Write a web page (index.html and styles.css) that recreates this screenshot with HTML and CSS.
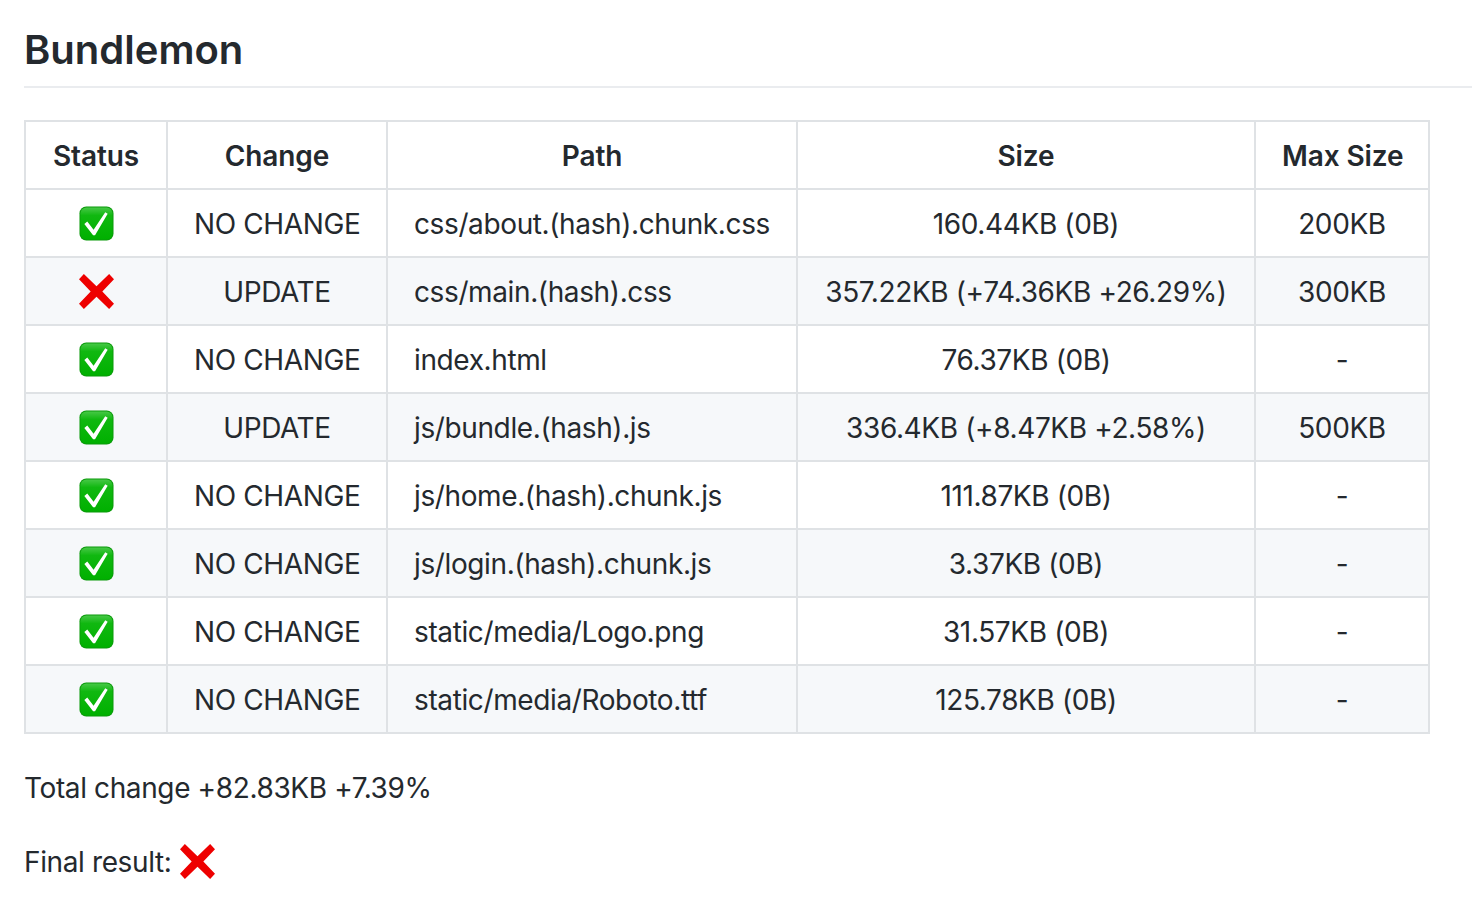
FILE: index.html
```html
<!DOCTYPE html>
<html lang="en">
<head>
<meta charset="utf-8">
<title>Bundlemon</title>
<link rel="stylesheet" href="styles.css">
</head>
<body>
<svg class="defs" width="0" height="0" aria-hidden="true">
  <defs>
    <linearGradient id="g" x1="0" y1="0" x2="0" y2="1">
      <stop offset="0" stop-color="#46c846"/><stop offset="0.25" stop-color="#10b810"/><stop offset="1" stop-color="#00b000"/>
    </linearGradient>
    <symbol id="ok" viewBox="0 0 36 36">
      <rect x="0.5" y="0.5" width="35" height="35" rx="7" fill="#0a9a0a"/>
      <rect x="1.5" y="1.5" width="33" height="33" rx="6" fill="url(#g)"/>
      <path d="M5.5 18.5 L8.5 16 L15 24.5 L27 6.5 L29.5 8 L16.5 30 L14.5 30 Z" fill="#fff"/>
    </symbol>
    <symbol id="no" viewBox="0 0 36 36">
      <path d="M5 0 L18 12.5 L31 0 L36 5.5 L24 18 L36 30.5 L31 36 L18 23.5 L5 36 L0 30.5 L12 18 L0 5.5 Z" fill="#ee0000"/>
    </symbol>
  </defs>
</svg>
<h2 class="title">Bundlemon</h2>
<table class="report">
  <colgroup>
    <col class="c1"><col class="c2"><col class="c3"><col class="c4"><col class="c5">
  </colgroup>
  <thead>
    <tr><th>Status</th><th>Change</th><th>Path</th><th>Size</th><th>Max Size</th></tr>
  </thead>
  <tbody>
    <tr><td class="mid"><svg class="emoji"><use href="#ok"/></svg></td><td class="mid">NO CHANGE</td><td>css/about.(hash).chunk.css</td><td class="mid">160.44KB (0B)</td><td class="mid">200KB</td></tr>
    <tr><td class="mid"><svg class="emoji"><use href="#no"/></svg></td><td class="mid">UPDATE</td><td>css/main.(hash).css</td><td class="mid">357.22KB (+74.36KB +26.29%)</td><td class="mid">300KB</td></tr>
    <tr><td class="mid"><svg class="emoji"><use href="#ok"/></svg></td><td class="mid">NO CHANGE</td><td>index.html</td><td class="mid">76.37KB (0B)</td><td class="mid">-</td></tr>
    <tr><td class="mid"><svg class="emoji"><use href="#ok"/></svg></td><td class="mid">UPDATE</td><td>js/bundle.(hash).js</td><td class="mid">336.4KB (+8.47KB +2.58%)</td><td class="mid">500KB</td></tr>
    <tr><td class="mid"><svg class="emoji"><use href="#ok"/></svg></td><td class="mid">NO CHANGE</td><td>js/home.(hash).chunk.js</td><td class="mid">111.87KB (0B)</td><td class="mid">-</td></tr>
    <tr><td class="mid"><svg class="emoji"><use href="#ok"/></svg></td><td class="mid">NO CHANGE</td><td>js/login.(hash).chunk.js</td><td class="mid">3.37KB (0B)</td><td class="mid">-</td></tr>
    <tr><td class="mid"><svg class="emoji"><use href="#ok"/></svg></td><td class="mid">NO CHANGE</td><td>static/media/Logo.png</td><td class="mid">31.57KB (0B)</td><td class="mid">-</td></tr>
    <tr><td class="mid"><svg class="emoji"><use href="#ok"/></svg></td><td class="mid">NO CHANGE</td><td>static/media/Roboto.ttf</td><td class="mid">125.78KB (0B)</td><td class="mid">-</td></tr>
  </tbody>
</table>
<p class="note note-total">Total change +82.83KB +7.39%</p>
<p class="note">Final result: <svg class="emoji"><use href="#no"/></svg></p>
</body>
</html>
```
FILE: styles.css
```css
* { box-sizing: border-box; }
html, body { margin: 0; padding: 0; background: #fff; }
body {
  padding: 24px 0 0 24px;
  font-family: Inter, "Liberation Sans", sans-serif;
  font-size: 28px;
  line-height: 42px;
  letter-spacing: -0.38px;
  color: #24292e;
  overflow: hidden;
}
.defs { position: absolute; }
.title {
  margin: 0 0 32px;
  padding-top: 1px;
  font-size: 40px;
  line-height: 50px;
  font-weight: 600;
  letter-spacing: 0;
  height: 64px;
  border-bottom: 2px solid #eaecef;
}
.report {
  border-collapse: collapse;
  table-layout: fixed;
  width: 1404px;
}
.c1 { width: 142px; }
.c2 { width: 220px; }
.c3 { width: 410px; }
.c4 { width: 458px; }
.c5 { width: 174px; }
.report th, .report td {
  border: 2px solid #dfe2e5;
  padding: 13px 26px 11px;
  white-space: nowrap;
}
.report th { font-weight: 600; text-align: center; letter-spacing: -0.1px; }
.report .mid { text-align: center; }
.report tbody tr:nth-child(even) { background: #f6f8fa; }
.emoji { width: 35px; height: 35px; margin-left: 1px; vertical-align: -7px; display: inline-block; }
.note { margin: 32px 0 0; }
.note-total { margin-top: 33px; }
```
